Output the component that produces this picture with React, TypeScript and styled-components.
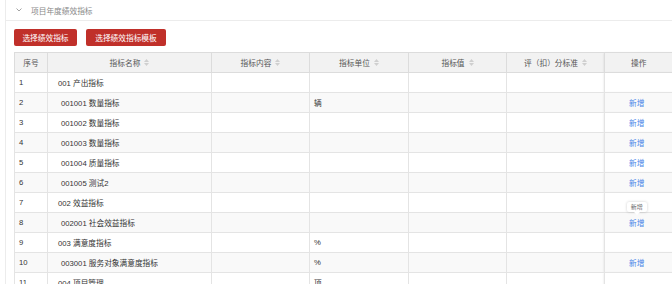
import styled, { createGlobalStyle } from "styled-components";

// Global page styles
const GlobalStyle = createGlobalStyle`
    html, body {
        margin: 0;
        padding: 0;
        background: #fff;
    }
    body {
        width: 672px;
        height: 284px;
        overflow: hidden;
        font-family: "Liberation Sans", "Noto Sans CJK SC", sans-serif;
        font-size: 7.7px;
        color: #333;
    }
`;

const Panel = styled.div`
    margin-left: 5px;
    border-left: 1px solid #ececec;
    height: 284px;
    overflow: hidden;
`;

const PanelHeader = styled.div`
    display: flex;
    align-items: center;
    height: 20px;
    padding-left: 10px;
    border-bottom: 1px solid #ececec;
    color: #888;
    gap: 9px;
`;

const PanelBody = styled.div`
    padding: 8px 0 0 8px;
`;

const Toolbar = styled.div`
    display: flex;
    gap: 9px;
    margin-bottom: 6px;
`;

const RedButton = styled.button<{ $w: number }>`
    width: ${(p) => p.$w}px;
    height: 17px;
    padding: 0;
    border: none;
    border-radius: 2px;
    background-color: #c0302a;
    color: #fff;
    font-family: inherit;
    font-size: 7.7px;
    cursor: pointer;
`;

const Table = styled.table`
    border-collapse: collapse;
    table-layout: fixed;
    width: 680px;
`;

const Col = styled.col<{ $w: number }>`
    width: ${(p) => p.$w}px;
`;

const Th = styled.th`
    height: 19px;
    padding: 0;
    background: #f2f2f2;
    border: 1px solid #dcdcdc;
    font-weight: normal;
    color: #555;
    text-align: center;
`;

const OpTh = styled(Th)`
    border-left: 1px solid #c8c8c8;
    box-shadow: -1px 0 2px rgba(0, 0, 0, 0.12);
    text-align: left;
    padding-left: 26px;
`;

const Row = styled.tr<{ $odd: boolean }>`
    background: ${(p) => (p.$odd ? "#fff" : "#f9f9f9")};
`;

const Td = styled.td`
    height: 19px;
    padding: 0 0 0 4px;
    border: 1px solid #e4e4e4;
    white-space: nowrap;
    overflow: hidden;
`;

const NameTd = styled(Td)<{ $level: number }>`
    padding-left: ${(p) => (p.$level === 1 ? 10 : 13)}px;
`;

const OpTd = styled(Td)`
    border-left: 1px solid #c8c8c8;
    box-shadow: -1px 0 2px rgba(0, 0, 0, 0.12);
    padding-left: 24px;
    overflow: visible;
`;

const AddLink = styled.span`
    position: relative;
    display: inline-block;
    color: #4a86e8;
    cursor: pointer;
`;

const Tip = styled.span`
    position: absolute;
    bottom: calc(100% + 5px);
    left: 50%;
    transform: translateX(-50%);
    padding: 1px 4px;
    background: #fff;
    color: #666;
    font-size: 6px;
    line-height: 8px;
    border-radius: 2px;
    box-shadow: 0 0 3px rgba(0, 0, 0, 0.2);
    white-space: nowrap;
    &::after {
        content: "";
        position: absolute;
        top: 100%;
        left: 50%;
        margin-left: -3px;
        border: 3px solid transparent;
        border-top-color: #fff;
    }
`;

const HeadLabel = styled.span`
    display: inline-flex;
    align-items: center;
    gap: 4px;
`;

function SortIcon() {
    return (
        <svg width="5" height="7" viewBox="0 0 5 7">
            <path d="M2.5 0 L5 3 L0 3 Z" fill="#cfcfcf" />
            <path d="M0 4 L5 4 L2.5 7 Z" fill="#cfcfcf" />
        </svg>
    );
}

function Chevron() {
    return (
        <svg width="6" height="4" viewBox="0 0 6 4">
            <path d="M0.5 0.5 L3 3 L5.5 0.5" stroke="#999" strokeWidth="0.9" fill="none" />
        </svg>
    );
}

interface Item {
    name: string;
    level: number;
    unit?: string;
    add?: boolean;
    tip?: boolean;
}

const rows: Item[] = [
    { name: "001 产出指标", level: 1 },
    { name: "001001 数量指标", level: 2, unit: "辆", add: true },
    { name: "001002 数量指标", level: 2, add: true },
    { name: "001003 数量指标", level: 2, add: true },
    { name: "001004 质量指标", level: 2, add: true },
    { name: "001005 测试2", level: 2, add: true },
    { name: "002 效益指标", level: 1 },
    { name: "002001 社会效益指标", level: 2, add: true, tip: true },
    { name: "003 满意度指标", level: 1, unit: "%" },
    { name: "003001 服务对象满意度指标", level: 2, unit: "%", add: true },
    { name: "004 项目管理", level: 1, unit: "项" },
];

// column widths in px (border to border)
const widths = [33, 164, 98, 99, 98, 98, 90];
const titles = ["指标名称", "指标内容", "指标单位", "指标值", "评（扣）分标准"];

export default function App() {
    return (
        <>
            <GlobalStyle />
            <Panel>
                <PanelHeader>
                    <Chevron />
                    <span>项目年度绩效指标</span>
                </PanelHeader>
                <PanelBody>
                    <Toolbar>
                        <RedButton $w={63}>选择绩效指标</RedButton>
                        <RedButton $w={80}>选择绩效指标模板</RedButton>
                    </Toolbar>
                    <Table>
                        <colgroup>
                            {widths.map((w, i) => (
                                <Col key={i} $w={w} />
                            ))}
                        </colgroup>
                        <thead>
                            <tr>
                                <Th>序号</Th>
                                {titles.map((t) => (
                                    <Th key={t}>
                                        <HeadLabel>
                                            {t}
                                            <SortIcon />
                                        </HeadLabel>
                                    </Th>
                                ))}
                                <OpTh>操作</OpTh>
                            </tr>
                        </thead>
                        <tbody>
                            {rows.map((r, i) => (
                                <Row key={i} $odd={i % 2 === 0}>
                                    <Td>{i + 1}</Td>
                                    <NameTd $level={r.level}>{r.name}</NameTd>
                                    <Td />
                                    <Td>{r.unit}</Td>
                                    <Td />
                                    <Td />
                                    <OpTd>
                                        {r.add && (
                                            <AddLink>
                                                新增
                                                {r.tip && <Tip>新增</Tip>}
                                            </AddLink>
                                        )}
                                    </OpTd>
                                </Row>
                            ))}
                        </tbody>
                    </Table>
                </PanelBody>
            </Panel>
        </>
    );
}
